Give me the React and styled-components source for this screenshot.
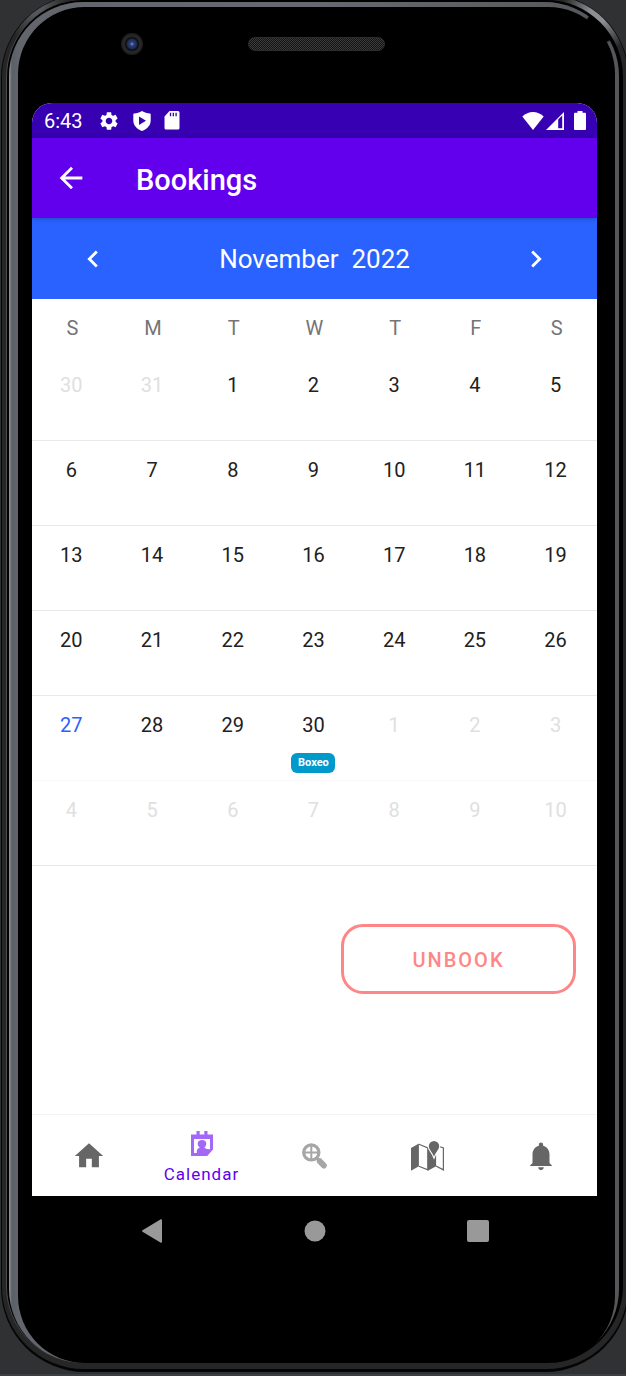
import React from "react";
import styled, { createGlobalStyle } from "styled-components";

const GlobalStyle = createGlobalStyle`
  *, *::before, *::after { box-sizing: border-box; }
  body {
    margin: 0;
    background: #2f3133;
    font-family: Roboto, "Liberation Sans", sans-serif;
  }
  button { font: inherit; color: inherit; }
`;

/* ---------- device ---------- */

const Desk = styled.div`
  display: flow-root;
  overflow: hidden;
  padding-bottom: 2px;
  border-bottom: 2px solid #3c3f42;
`;

const Shell = styled.div`
  margin: -6px -3px 0 1px;
  padding: 1px 1px 3px 1px;
  border-radius: 84px;
  background: #050505;
`;

const Rim = styled.div`
  padding: 5px 5px 6px 4px;
  border-radius: 82px;
  background:
    radial-gradient(circle at right 30px top 20px, #8d8f93 8px, transparent 38px),
    radial-gradient(circle at left 34px top 14px, #55575a 6px, transparent 34px),
    #262626;
`;

const Gasket = styled.div`
  padding: 2px 4px 0 2px;
  border-left: 1px solid #4a4b4d;
  border-radius: 77px;
  background: #000;
`;

const Chrome = styled.div`
  padding: 5px 4px 0 9px;
  border-radius: 74px;
  background:
    radial-gradient(circle at right 18px top 25px, #000 15px, transparent 17px),
    linear-gradient(90deg, #93969a 0, #5b5f66 3px, #62666c 9px, #66696f 50%, #55565a 100%);
`;

const Glass = styled.div`
  padding: 0 18px 0 14px;
  border-radius: 67px;
  background: #000;
`;

const Earpiece = styled.div`
  display: flex;
  align-items: center;
  justify-content: center;
  gap: 105px;
  height: 96px;
  padding: 0 123px 22px 0;
`;

const Camera = styled.div`
  width: 22px;
  height: 22px;
  border-radius: 50%;
  background: radial-gradient(circle, #7f93cf 0, #2c3d78 2px, #1c2850 5px, #0b0b0d 6px, #2a2a2a 8px, #1c1c1c 11px);
`;

const Speaker = styled.div`
  width: 137px;
  height: 14px;
  border: 1px solid #2c2c2c;
  border-radius: 7px;
  background: repeating-conic-gradient(#3c3c3c 0 25%, #131313 0 50%) 0 0 / 2px 2px;
`;

const Screen = styled.div`
  overflow: hidden;
  border-radius: 20px 20px 0 0;
  background: #fff;
`;

const Chin = styled.div`
  height: 97px;
`;

const SystemNav = styled.nav`
  display: flex;
  align-items: center;
  justify-content: center;
  gap: 141px;
  height: 70px;
`;

const IconButton = styled.button`
  display: flex;
  align-items: center;
  justify-content: center;
  padding: 0;
  border: 0;
  background: none;
  cursor: pointer;
`;

/* ---------- bars ---------- */

const StatusBar = styled.div`
  display: flex;
  align-items: center;
  height: 35px;
  padding: 0 11px 0 12px;
  background: #3700b3;
  color: #fff;
`;

const Clock = styled.span`
  font-size: 20px;
  line-height: 24px;
`;

const Notifications = styled.div`
  display: flex;
  align-items: center;
  gap: 13px;
  margin-left: 15px;
`;

const Connectivity = styled.div`
  display: flex;
  align-items: center;
  gap: 2px;
  margin: 0 10px 0 auto;
`;

const AppBar = styled.header`
  position: relative;
  display: flex;
  align-items: center;
  gap: 48px;
  height: 80px;
  padding-left: 22px;
  background: #6200ee;
  color: #fff;
  box-shadow: 0 1px 4px rgba(0, 0, 0, 0.25);
`;

const Title = styled.h1`
  margin: 0;
  padding-top: 3px;
  font-size: 29px;
  font-weight: 500;
  line-height: 32px;
`;

const MonthBar = styled.div`
  display: flex;
  align-items: center;
  justify-content: space-between;
  height: 81px;
  padding: 0 44px;
  background: #2962ff;
  color: #fff;
`;

const MonthName = styled.h2`
  margin: 0;
  font-size: 26px;
  font-weight: 400;
  line-height: 32px;
  white-space: pre;
`;

/* ---------- calendar ---------- */

const Calendar = styled.table`
  width: 100%;
  table-layout: fixed;
  border-collapse: separate;
  border-spacing: 0;
  font-size: 20px;
  line-height: 24px;
  text-align: center;
`;

const Weekday = styled.th`
  height: 57px;
  padding: 1px 0 0;
  font-weight: 400;
  color: #757575;
`;

const DayCell = styled.td`
  height: 85px;
  padding: 17px 2px 0 0;
  vertical-align: top;
  border-bottom: 1px solid ${(p) => (p.$faint ? "#f8f8f8" : "#e8e8e8")};
  color: ${(p) => (p.$today ? "#2962ff" : p.$muted ? "#e0e0e0" : "#212121")};
`;

const EventTag = styled.div`
  width: 44px;
  height: 20px;
  margin: 16px auto 0;
  border-radius: 6px;
  background: #0099cc;
  color: #fff;
  font-size: 11px;
  font-weight: 700;
  line-height: 20px;
`;

const Actions = styled.div`
  display: flex;
  justify-content: flex-end;
  padding: 58px 21px 120px;
`;

const OutlineButton = styled.button`
  width: 235px;
  height: 70px;
  padding: 2px 0 0;
  border: 3px solid #ff8686;
  border-radius: 22px;
  background: #fff;
  color: #ff8686;
  font-size: 20px;
  font-weight: 500;
  letter-spacing: 2px;
  cursor: pointer;
`;

const BottomNav = styled.nav`
  display: grid;
  grid-template-columns: repeat(5, 1fr);
  height: 82px;
  border-top: 1px solid #f3f3f3;
`;

const NavItem = styled.a`
  display: flex;
  flex-direction: column;
  align-items: center;
  justify-content: center;
  gap: 8px;
  padding-top: ${(p) => (p.$active ? 4 : 0)}px;
  color: ${(p) => (p.$active ? "#6200ee" : "#666")};
  font-size: 17px;
  line-height: 20px;
  letter-spacing: 1px;
  text-decoration: none;
`;

/* ---------- icons ---------- */

const Glyph = ({ size = 34, d }) => (
  <svg width={size} height={size} viewBox="0 0 24 24" fill="currentColor" aria-hidden="true">
    <path d={d} />
  </svg>
);

const paths = {
  back: "M20 11H7.83l5.59-5.59L12 4l-8 8 8 8 1.41-1.41L7.83 13H20v-2z",
  left: "M15.41 7.41L14 6l-6 6 6 6 1.41-1.41L10.83 12z",
  right: "M10 6L8.59 7.41 13.17 12l-4.58 4.59L10 18l6-6z",
  home: "M10 20v-6h4v6h5v-8h3L12 3 2 12h3v8z",
  bell: "M12 22c1.1 0 2-.9 2-2h-4c0 1.1.89 2 2 2zm6-4v-7c0-3.07-1.64-5.64-4.5-6.32V4c0-.83-.67-1.5-1.5-1.5s-1.5.67-1.5 1.5v.68C7.63 5.36 6 7.92 6 11v6l-2 2h16l-2-2z",
  gear: "M19.14 12.94c.04-.3.06-.61.06-.94 0-.32-.02-.64-.07-.94l2.03-1.58c.18-.14.23-.41.12-.61l-1.92-3.32c-.12-.22-.37-.29-.59-.22l-2.39.96c-.5-.38-1.03-.7-1.62-.94l-.36-2.54c-.04-.24-.24-.41-.48-.41h-3.84c-.24 0-.43.17-.47.41l-.36 2.54c-.59.24-1.13.57-1.62.94l-2.39-.96c-.22-.08-.47 0-.59.22L2.74 8.87c-.12.21-.08.47.12.61l2.03 1.58c-.05.3-.09.63-.09.94s.02.64.07.94l-2.03 1.58c-.18.14-.23.41-.12.61l1.92 3.32c.12.22.37.29.59.22l2.39-.96c.5.38 1.03.7 1.62.94l.36 2.54c.05.24.24.41.48.41h3.84c.24 0 .44-.17.47-.41l.36-2.54c.59-.24 1.13-.56 1.62-.94l2.39.96c.22.08.47 0 .59-.22l1.92-3.32c.12-.22.07-.47-.12-.61l-2.01-1.58zM12 15.6c-1.98 0-3.6-1.62-3.6-3.6s1.62-3.6 3.6-3.6 3.6 1.62 3.6 3.6-1.62 3.6-3.6 3.6z",
};

const ShieldIcon = () => (
  <svg width="18" height="20" viewBox="0 0 18 20" aria-hidden="true">
    <path d="M9 0c2.500 1.600 5.200 2.400 8 2.600.5 0 .7.400.7.900v6c0 4.700-3.600 8.800-8.700 10.500C3.900 18.300.3 14.200.3 9.500v-6c0-.5.200-.9.700-.9C3.800 2.400 6.500 1.600 9 0z" fill="#fff" />
    <path d="M6 5.500v8.500l7-4.250z" fill="#3700b3" />
  </svg>
);

const SdIcon = () => (
  <svg width="16" height="19" viewBox="0 0 16 19" aria-hidden="true">
    <path d="M5.500 0H14a1.500 1.500 0 0 1 1.500 1.500v15.500A1.500 1.500 0 0 1 14 18.500H2A1.500 1.500 0 0 1 .5 17V5.500z" fill="#fff" />
    <path d="M6.500 1.800v3.400M9.300 1.800v3.400M12.100 1.800v3.400" stroke="#3700b3" strokeWidth="1.300" />
  </svg>
);

const WifiIcon = () => (
  <svg width="22" height="18" viewBox="0 0 22 18" aria-hidden="true">
    <path d="M.3 4.500C3.500 1.500 7 0 11 0s7.500 1.500 10.700 4.500L11 18z" fill="#fff" />
  </svg>
);

const SignalIcon = () => (
  <svg width="18" height="18" viewBox="0 0 18 18" aria-hidden="true">
    <path fillRule="evenodd" d="M18 0v18H0zM12.200 7.500v8.700h4V3.600z" fill="#fff" />
  </svg>
);

const BatteryIcon = () => (
  <svg width="12" height="19" viewBox="0 0 12 19" aria-hidden="true">
    <path d="M3.500 0h5v1.800H11a1 1 0 0 1 1 1V18a1 1 0 0 1-1 1H1a1 1 0 0 1-1-1V2.800a1 1 0 0 1 1-1h2.500z" fill="#fff" />
  </svg>
);

const CalendarIcon = () => (
  <svg width="22" height="25" viewBox="0 0 22 25" aria-hidden="true">
    <path
      fillRule="evenodd"
      d="M5.500 0h3.200v3.400h4.600V0h3.200v3.400H22v15.200L16.200 25H0V3.400h5.500zM3 8v14h2.800v-1.800c0-2 1.300-3 3-3.400-1.500-1.300-2.100-2.700-2.100-4.200C6.700 10.300 8.400 9 11 9s4.300 1.300 4.300 3.600c0 1.500-.6 2.900-2.100 4.200 1 .3 1.800.7 2.300 1.300l3.500.1V8z"
      fill="#a368f6"
    />
  </svg>
);

const ZoomIcon = () => (
  <svg width="25" height="26" viewBox="0 0 25 26" fill="none" stroke="#a6a6a6" aria-hidden="true">
    <circle cx="9.300" cy="9.400" r="7.600" strokeWidth="3.200" />
    <path d="M9.300 3v13M3 9.400h13" strokeWidth="2" />
    <path d="M14.500 15l2.500 2.500" strokeWidth="3" />
    <path d="M17.800 18.200l4 4.300" strokeWidth="6" strokeLinecap="round" />
  </svg>
);

const MapIcon = () => (
  <svg width="33" height="30" viewBox="0 0 33 30" aria-hidden="true">
    <path d="M0 7l7.900-4.400v22.700L0 29.700zM16.800 7l8.300-3.400v21.700l-8.300 4.400z" fill="#666" />
    <path d="M7.900 3.200l8.900 3.700v22L7.900 25.300M25 4.200l7.400 2.700v22L25 25" fill="none" stroke="#666" strokeWidth="1.200" />
    <path
      d="M23 0a5.200 5.200 0 0 1 5.200 5.200c0 3-3.200 5.400-5.200 10.400-2-5-5.200-7.400-5.200-10.400A5.200 5.200 0 0 1 23 0z"
      fill="#666"
      stroke="#fff"
      strokeWidth="2.400"
      paintOrder="stroke"
    />
  </svg>
);

const SystemIcon = ({ children }) => (
  <svg width="22" height="24" viewBox="0 0 22 24" fill="#999" aria-hidden="true">
    {children}
  </svg>
);

/* ---------- data ---------- */

const weekdays = ["S", "M", "T", "W", "T", "F", "S"];

const gridDays = Array.from({ length: 42 }, (_, i) => {
  const day = new Date(2022, 9, 30 + i);
  const inMonth = day.getMonth() === 10;
  return {
    date: day.getDate(),
    muted: !inMonth,
    today: inMonth && day.getDate() === 27,
    event: inMonth && day.getDate() === 30 ? "Boxeo" : null,
  };
});

const weeks = Array.from({ length: 6 }, (_, w) => gridDays.slice(w * 7, w * 7 + 7));

const tabs = [
  { name: "Home", icon: <Glyph d={paths.home} /> },
  { name: "Calendar", icon: <CalendarIcon />, active: true },
  { name: "Search", icon: <ZoomIcon /> },
  { name: "Map", icon: <MapIcon /> },
  { name: "Notifications", icon: <Glyph d={paths.bell} /> },
];

export default function App() {
  return (
    <Desk>
      <GlobalStyle />
      <Shell>
        <Rim>
          <Gasket>
            <Chrome>
              <Glass>
                <Earpiece>
                  <Camera />
                  <Speaker />
                </Earpiece>
                <Screen>
                  <StatusBar>
                    <Clock>6:43</Clock>
                    <Notifications>
                      <Glyph size={22} d={paths.gear} />
                      <ShieldIcon />
                      <SdIcon />
                    </Notifications>
                    <Connectivity>
                      <WifiIcon />
                      <SignalIcon />
                    </Connectivity>
                    <BatteryIcon />
                  </StatusBar>
                  <AppBar>
                    <IconButton aria-label="Back">
                      <Glyph d={paths.back} />
                    </IconButton>
                    <Title>Bookings</Title>
                  </AppBar>
                  <MonthBar>
                    <IconButton aria-label="Previous month">
                      <Glyph d={paths.left} />
                    </IconButton>
                    <MonthName>{"November  2022"}</MonthName>
                    <IconButton aria-label="Next month">
                      <Glyph d={paths.right} />
                    </IconButton>
                  </MonthBar>
                  <Calendar>
                    <thead>
                      <tr>
                        {weekdays.map((d, i) => (
                          <Weekday key={i} scope="col">{d}</Weekday>
                        ))}
                      </tr>
                    </thead>
                    <tbody>
                      {weeks.map((week, w) => (
                        <tr key={w}>
                          {week.map((day, i) => (
                            <DayCell key={i} $muted={day.muted} $today={day.today} $faint={w === 4}>
                              {day.date}
                              {day.event && <EventTag>{day.event}</EventTag>}
                            </DayCell>
                          ))}
                        </tr>
                      ))}
                    </tbody>
                  </Calendar>
                  <Actions>
                    <OutlineButton>UNBOOK</OutlineButton>
                  </Actions>
                  <BottomNav>
                    {tabs.map((t) => (
                      <NavItem key={t.name} href="#" $active={t.active} aria-label={t.name}>
                        {t.icon}
                        {t.active && <span>{t.name}</span>}
                      </NavItem>
                    ))}
                  </BottomNav>
                </Screen>
                <SystemNav>
                  <IconButton aria-label="System back">
                    <SystemIcon>
                      <path d="M19.800.2Q21 0 21 1v22q0 1-1.200.8L1.500 12.700Q.5 12 1.500 11.300z" />
                    </SystemIcon>
                  </IconButton>
                  <IconButton aria-label="System home">
                    <SystemIcon>
                      <circle cx="11" cy="12" r="10.500" />
                    </SystemIcon>
                  </IconButton>
                  <IconButton aria-label="System overview">
                    <SystemIcon>
                      <rect x="0" y="1" width="22" height="22" rx="2" />
                    </SystemIcon>
                  </IconButton>
                </SystemNav>
                <Chin />
              </Glass>
            </Chrome>
          </Gasket>
        </Rim>
      </Shell>
    </Desk>
  );
}
